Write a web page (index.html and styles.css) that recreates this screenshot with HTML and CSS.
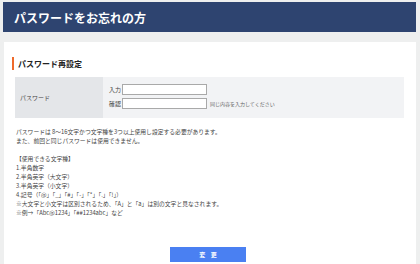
FILE: index.html
```html
<!DOCTYPE html>
<html lang="ja">
<head>
<meta charset="utf-8">
<title>パスワードをお忘れの方</title>
<link rel="stylesheet" href="styles.css">
</head>
<body>
<div class="page">
  <header class="header">パスワードをお忘れの方</header>
  <div class="spacer"></div>
  <main class="main">
    <h2 class="section-title">パスワード再設定</h2>
    <div class="form-table">
      <div class="label-cell">パスワード</div>
      <div class="field-cell">
        <div class="field-row"><span class="field-label">入力</span><input class="field-input" type="password"></div>
        <div class="field-row"><span class="field-label">確認</span><input class="field-input" type="password"><span class="hint">同じ内容を入力してください</span></div>
      </div>
    </div>
    <div class="notes">
      <p>パスワードは 8～16文字かつ文字種を3つ以上使用し設定する必要があります。</p>
      <p>また、前回と同じパスワードは使用できません。</p>
      <p class="blank">&nbsp;</p>
      <p>【使用できる文字種】</p>
      <p>1.半角数字</p>
      <p>2.半角英字（大文字）</p>
      <p>3.半角英字（小文字）</p>
      <p>4.記号（「@」「_」「#」「-」「*」「.」「!」）</p>
      <p>※大文字と小文字は区別されるため、「A」と「a」は別の文字と見なされます。</p>
      <p>※例→「Abc@1234」「##1234abc」など</p>
    </div>
    <div class="actions">
      <button class="submit" type="button">変 更</button>
    </div>
  </main>
</div>
</body>
</html>
```

FILE: styles.css
```css
html, body {
  margin: 0;
  padding: 0;
}
body {
  background: #eeefef;
  font-family: "Noto Sans CJK JP", "Noto Sans", sans-serif;
  color: #444;
  height: 264px;
  overflow: hidden;
}
.page {
  margin: 0 4px 0 3px;
  padding-top: 2px;
}
.header {
  height: 30px;
  background: #2e4470;
  color: #fff;
  font-size: 12px;
  font-weight: bold;
  display: flex;
  align-items: center;
  padding-left: 11px;
  box-sizing: border-box;
}
.spacer {
  height: 10px;
}
.main {
  background: #fff;
  margin-left: 1px;
  padding: 15px 12px 0 8px;
  height: 222px;
  box-sizing: border-box;
}
.section-title {
  margin: 0;
  height: 13px;
  border-left: 2px solid #ef6a2b;
  padding-left: 4px;
  font-size: 8px;
  font-weight: bold;
  color: #222;
  line-height: 13px;
}
.form-table {
  display: flex;
  margin: 7px 0 0 3px;
  background: #f2f3f5;
}
.label-cell {
  width: 88px;
  background: #e4e6e9;
  font-size: 6px;
  color: #444;
  display: flex;
  align-items: center;
  padding-left: 5px;
  box-sizing: border-box;
}
.field-cell {
  flex: 1;
  padding: 7px 0 9px 6px;
  display: flex;
  flex-direction: column;
  gap: 3px;
}
.field-row {
  display: flex;
  align-items: center;
  height: 11px;
}
.field-label {
  font-size: 6px;
  color: #444;
  width: 13px;
}
.field-input {
  width: 85px;
  height: 11px;
  box-sizing: border-box;
  border: 1px solid #a9a9a9;
  background: #fff;
  margin: 0;
  padding: 0;
}
.hint {
  font-size: 5px;
  color: #666;
  margin-left: 3px;
}
.notes {
  margin-top: 9px;
  padding-left: 4px;
  font-size: 5.8px;
  line-height: 9px;
  color: #444;
}
.notes p {
  margin: 0;
  white-space: nowrap;
}
.actions {
  display: flex;
  justify-content: center;
  margin-top: 30px;
}
.submit {
  width: 76px;
  height: 15px;
  background: #4a80f2;
  border: none;
  color: #fff;
  font-family: "Noto Sans CJK JP", sans-serif;
  font-size: 6px;
  font-weight: bold;
  letter-spacing: 2px;
  text-indent: 2px;
  padding: 0;
}
```
